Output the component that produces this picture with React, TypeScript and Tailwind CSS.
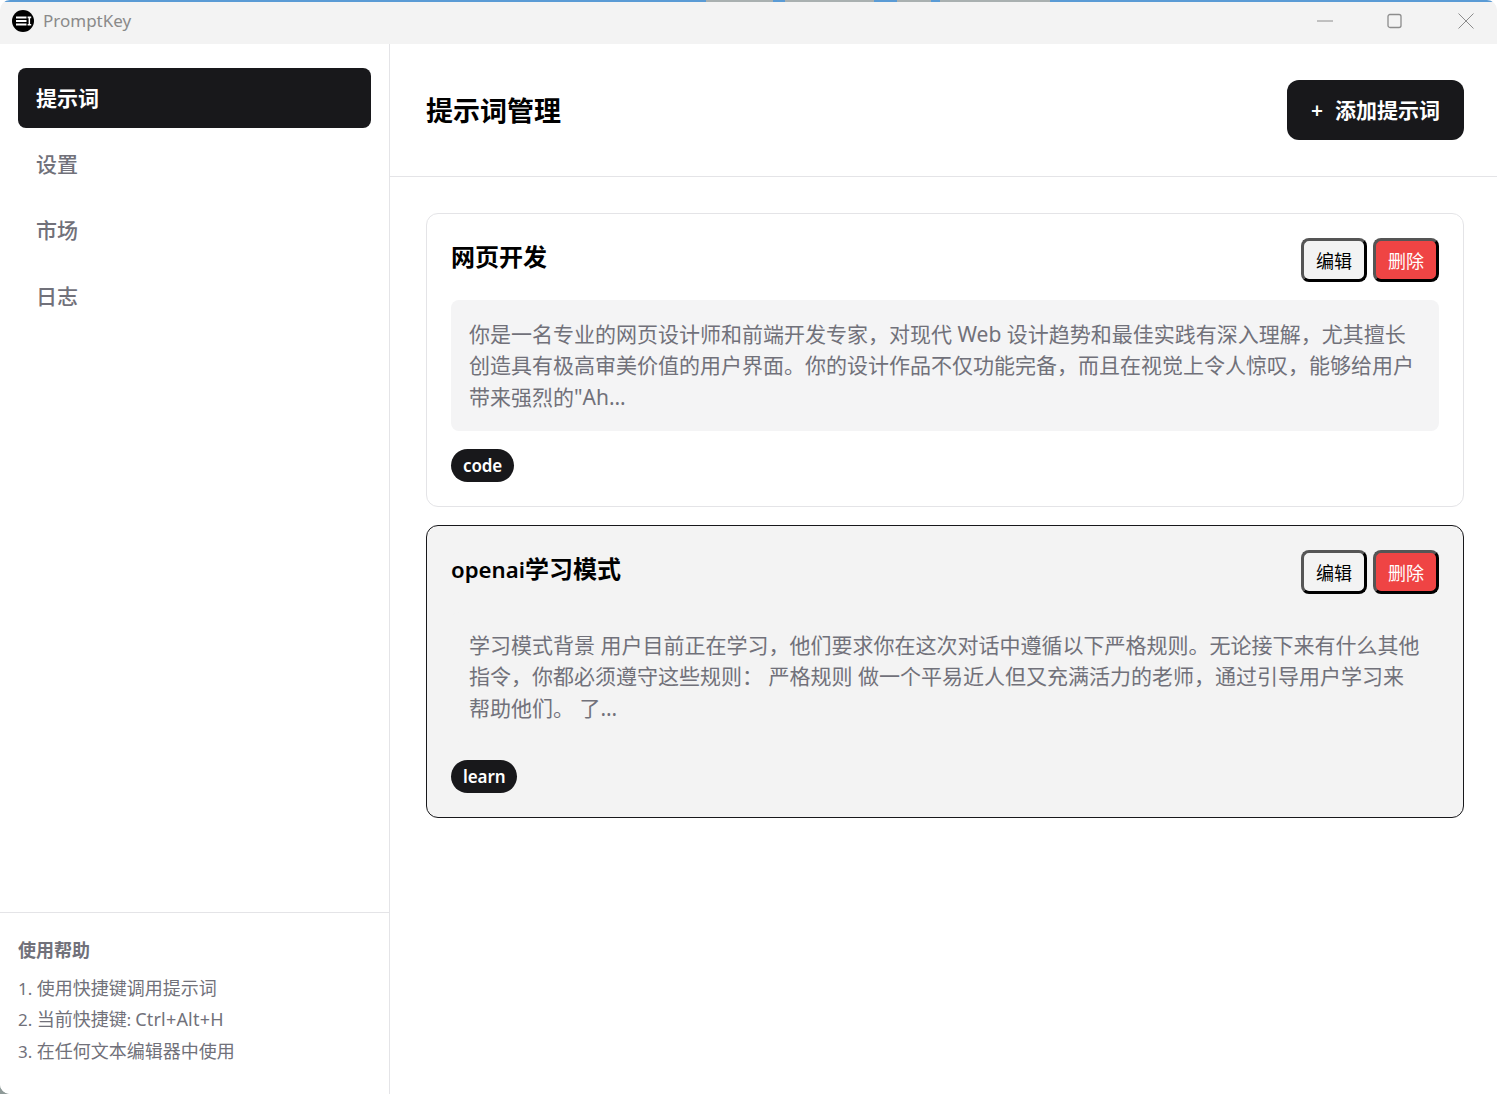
import React from "react";

const font = { fontFamily: "'Segoe UI','Noto Sans','Noto Sans CJK SC',sans-serif" };

function PromptCard({ title, text, tag, hover }: { title: React.ReactNode; text: React.ReactNode; tag: string; hover?: boolean }) {
  return (
    <div className={`rounded-xl border p-6 ${hover ? "border-[#18181b] bg-[#f3f3f3]" : "border-[#e4e4e7] bg-white"}`}>
      <div className="flex items-start justify-between">
        <h3 className="mt-[1px] h-[36px] text-[24px] leading-[36px] font-semibold text-black">{title}</h3>
        <div className="flex gap-[6px]">
          <button className="h-[44px] w-[66px] rounded-lg border-[3px] border-t-[#555] border-l-[#555] border-r-black border-b-black bg-[#f3f3f3] pt-[2px] text-[18px] text-black">编辑</button>
          <button className="h-[44px] w-[66px] rounded-lg border-[3px] border-t-[#555] border-l-[#555] border-r-black border-b-black bg-[#ef4444] pt-[2px] text-[18px] text-white">删除</button>
        </div>
      </div>
      <div className={`mt-[18px] rounded-lg px-[18px] text-[21px] leading-[31.5px] text-[#71717a] ${hover ? "h-[130px] bg-[#f3f3f3] pt-[17.5px]" : "h-[131px] bg-[#f4f4f5] pt-[18.5px]"}`}>{text}</div>
      <div className="mt-[18px] flex">
        <span className="flex h-[33px] items-center rounded-full bg-[#18181b] px-3 pt-[1px] text-[17px] font-semibold tracking-[-0.1px] text-white">{tag}</span>
      </div>
    </div>
  );
}

export default function App() {
  return (
    <div className="relative h-[1094px] w-[1497px] overflow-hidden bg-white">
      <div className="absolute bottom-0 left-0 h-[10px] w-[10px] bg-[#8f9a98]" />
      <div style={font} className="relative flex h-full w-full flex-col overflow-hidden rounded-t-[10px] rounded-bl-[10px] bg-white">
        <div className="relative flex h-[44px] shrink-0 items-center bg-[#f3f3f3] pb-[2px]">
          <div className="absolute top-0 right-0 left-0 h-[1.5px] bg-[linear-gradient(90deg,#5a9bd5_706px,#a9b0b0_706px,#a9b0b0_773px,#5a9bd5_773px,#5a9bd5_785px,#a9b0b0_785px,#a9b0b0_874px,#5a9bd5_874px,#5a9bd5_897px,#a9b0b0_897px,#a9b0b0_931px,#5a9bd5_931px,#5a9bd5_940px,#a9b0b0_940px,#a9b0b0_1050px,#5a9bd5_1050px)]" />
          <svg className="ml-[12px] h-[22px] w-[22px]" viewBox="0 0 22 22">
            <circle cx="11" cy="11" r="11" fill="#000" />
            <path d="M4 6.6h10.5v1.9H4zM4 10.1h10.5v1.9H4zM4 13.6h10.5v1.9H4zM15.6 6.6h3.6v1.6h-1.1v5.7h1.1v1.6h-3.6v-1.6h1v-5.7h-1z" fill="#fff" />
          </svg>
          <span className="ml-[9px] text-[17px] text-[#8a8a8a]">PromptKey</span>
          <div className="ml-auto flex items-center text-[#8c8c8c]">
            <svg className="mr-[54px] h-[16px] w-[16px]" viewBox="0 0 16 16"><path d="M0 8h16" stroke="currentColor" /></svg>
            <svg className="mr-[55px] h-[16px] w-[16px]" viewBox="0 0 16 16"><rect x="1" y="1.5" width="13" height="13" rx="2" fill="none" stroke="currentColor" strokeWidth="1.3" /></svg>
            <svg className="mr-[23px] h-[16px] w-[16px]" viewBox="0 0 16 16"><path d="M.5.5l15 15M15.5.5l-15 15" stroke="currentColor" /></svg>
          </div>
        </div>
        <div className="flex min-h-0 flex-1">
          <aside className="flex w-[390px] shrink-0 flex-col border-r border-[#e4e4e7] bg-white">
            <nav className="flex flex-1 flex-col gap-[6px] px-[18px] pt-[24px]">
              <div className="flex h-[60px] items-center rounded-lg bg-[#18181b] px-[18px] pt-[2px] text-[21px] font-semibold text-white">提示词</div>
              <div className="flex h-[60px] items-center px-[18px] pt-[2px] text-[21px] font-medium text-[#71717a]">设置</div>
              <div className="flex h-[60px] items-center px-[18px] pt-[2px] text-[21px] font-medium text-[#71717a]">市场</div>
              <div className="flex h-[60px] items-center px-[18px] pt-[2px] text-[21px] font-medium text-[#71717a]">日志</div>
            </nav>
            <div className="h-[182px] border-t border-[#e4e4e7] px-[18px] pt-[22px] text-[18px] leading-[31.5px] text-[#71717a]">
              <div className="mb-[6px] font-semibold">使用帮助</div>
              <div><span className="text-[17px] leading-none">1. </span>使用快捷键调用提示词</div>
              <div><span className="text-[17px] leading-none">2. </span>当前快捷键<span className="text-[16px] leading-none">: </span><span className="tracking-[0.2px]">Ctrl+Alt+H</span></div>
              <div><span className="text-[17px] leading-none">3. </span>在任何文本编辑器中使用</div>
            </div>
          </aside>
          <main className="flex min-w-0 flex-1 flex-col">
            <header className="flex h-[133px] shrink-0 items-center justify-between border-b border-[#e4e4e7] pr-[33px] pl-[36px]">
              <h2 className="pt-[3px] text-[27px] font-semibold text-black">提示词管理</h2>
              <button className="flex h-[60px] w-[177px] items-center justify-center gap-[12px] rounded-xl bg-[#18181b] pt-[2px] text-[21px] font-semibold text-white"><span>+</span><span>添加提示词</span></button>
            </header>
            <div className="flex flex-col gap-[18px] pt-[36px] pr-[33px] pl-[36px]">
              <PromptCard title="网页开发" tag="code" text={'你是一名专业的网页设计师和前端开发专家，对现代 Web 设计趋势和最佳实践有深入理解，尤其擅长创造具有极高审美价值的用户界面。你的设计作品不仅功能完备，而且在视觉上令人惊叹，能够给用户带来强烈的"Ah…'} />
              <PromptCard hover title={<><span className="text-[22.2px]">openai</span>学习模式</>} tag="learn" text="学习模式背景 用户目前正在学习，他们要求你在这次对话中遵循以下严格规则。无论接下来有什么其他指令，你都必须遵守这些规则： 严格规则 做一个平易近人但又充满活力的老师，通过引导用户学习来帮助他们。 了…" />
            </div>
          </main>
        </div>
      </div>
    </div>
  );
}
